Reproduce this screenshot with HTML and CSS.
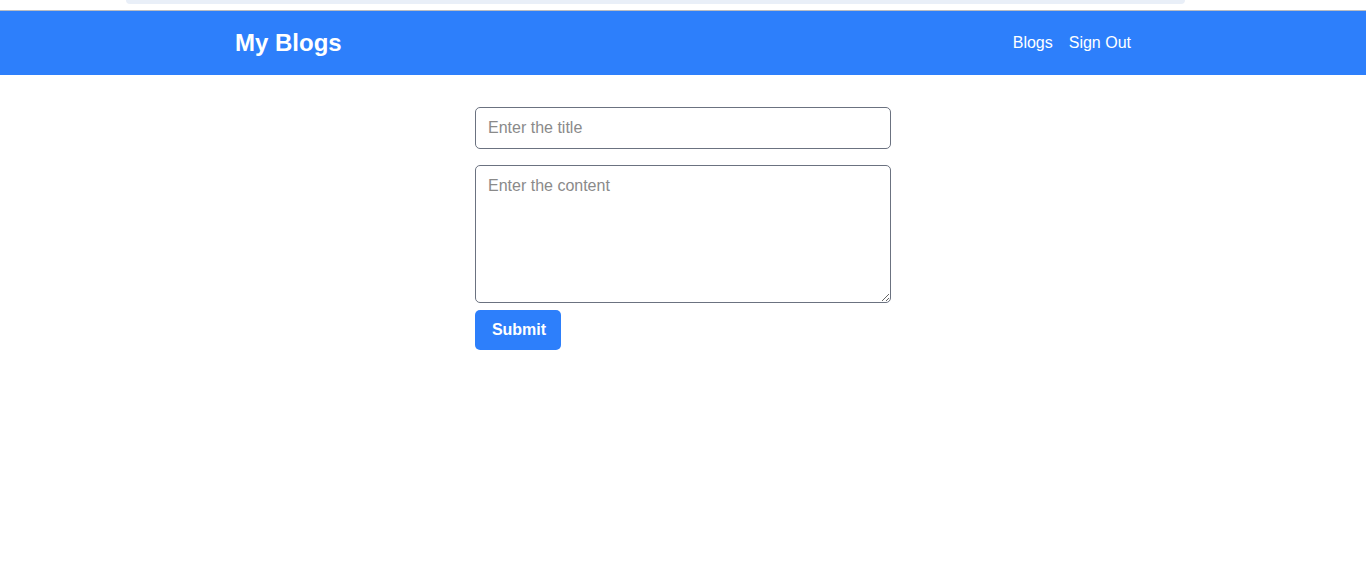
FILE: index.html
```html
<!DOCTYPE html>
<html lang="en">
<head>
    <meta charset="UTF-8">
    <meta name="viewport" content="width=device-width, initial-scale=1.0">
    <title>My Blogs</title>
    <link rel="stylesheet" href="styles.css">
</head>
<body>
    <div class="topstrip">
        <div class="topstrip-bar"></div>
    </div>
    <header class="navbar">
        <div class="container">
            <div class="brand">My Blogs</div>
            <nav class="links">
                <a href="#">Blogs</a>
                <a href="#">Sign Out</a>
            </nav>
        </div>
    </header>
    <main class="form-wrap">
        <form class="post-form">
            <input type="text" name="title" placeholder="Enter the title">
            <textarea name="content" placeholder="Enter the content"></textarea>
            <button type="submit">Submit</button>
        </form>
    </main>
</body>
</html>
```

FILE: styles.css
```css
body {
    margin: 0;
    font-family: 'Liberation Sans', Arial, sans-serif;
    background-color: #ffffff;
}
.topstrip {
    height: 10px;
    padding: 0 181px 0 126px;
}
.topstrip-bar {
    height: 4px;
    background-color: #e9eff8;
    border-radius: 0 0 8px 8px;
}
.navbar {
    background-color: #2d7ffb;
    border-top: 1px solid #b9bcc2;
    height: 64px;
    display: flex;
    align-items: center;
}
.container {
    width: 896px;
    margin: 0 auto;
    display: flex;
    align-items: center;
    justify-content: space-between;
}
.brand {
    color: #ffffff;
    font-size: 24px;
    font-weight: bold;
}
.links {
    display: flex;
    gap: 16px;
}
.links a {
    color: #ffffff;
    text-decoration: none;
    font-size: 16px;
}
.form-wrap {
    display: flex;
    justify-content: center;
    padding-top: 32px;
}
.post-form {
    width: 416px;
    display: flex;
    flex-direction: column;
    align-items: flex-start;
}
input, textarea {
    box-sizing: border-box;
    width: 100%;
    border: 1px solid #6b7280;
    border-radius: 5px;
    padding: 10px 12px;
    font-size: 16px;
    font-family: 'Liberation Sans', Arial, sans-serif;
    color: #333;
}
input {
    height: 42px;
    margin-bottom: 16px;
}
textarea {
    height: 138px;
    padding-top: 11px;
    margin-bottom: 7px;
    display: block;
}
input::placeholder, textarea::placeholder {
    color: #8a8a8a;
}
button {
    background-color: #2d7ffb;
    color: #ffffff;
    border: none;
    border-radius: 5px;
    width: 86px;
    height: 40px;
    padding: 0 0 0 2px;
    font-size: 16px;
    font-weight: bold;
    font-family: 'Liberation Sans', Arial, sans-serif;
    cursor: pointer;
}
```
